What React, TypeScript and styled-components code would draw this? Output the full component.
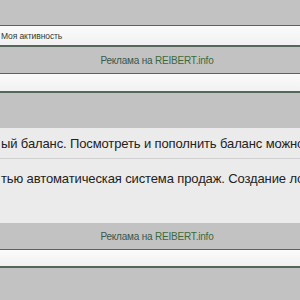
import React from "react";
import styled, { createGlobalStyle } from "styled-components";

const Global = createGlobalStyle`
  html, body { margin: 0; padding: 0; background: #c2c2c2; }
  body { width: 300px; height: 300px; overflow: hidden; font-family: Tahoma, "Liberation Sans", "DejaVu Sans", sans-serif; }
`;

const Page = styled.div`
  display: flex;
  flex-direction: column;
  width: 300px;
  height: 300px;
  overflow: hidden;
  background: #c2c2c2;
`;

const GraySpace = styled.div<{ $h: number }>`
  height: ${(p) => p.$h}px;
  background: #c2c2c2;
  flex-shrink: 0;
`;

const WhiteBar = styled.div<{ $h: number }>`
  height: ${(p) => p.$h}px;
  flex-shrink: 0;
  border-top: 1px solid #56665a;
  border-bottom: 2px solid #56665a;
  background: linear-gradient(#fbfbfb, #f1f1f1);
  display: flex;
  align-items: center;
  box-sizing: content-box;
`;

const NavLink = styled.span`
  font-size: 8.5px;
  letter-spacing: -0.1px;
  color: #2e3a32;
  padding-left: 1px;
`;

const AdBar = styled.div`
  height: 26px;
  flex-shrink: 0;
  background: #c2c2c2;
  display: flex;
  align-items: center;
  justify-content: center;
  font-size: 10px;
  letter-spacing: -0.2px;
  color: #3a574a;
  padding-left: 14px;
`;

const AdLink = styled.span`
  color: #3c6a3a;
`;

const Content = styled.div`
  height: 95px;
  flex-shrink: 0;
  background: #ebebeb;
  display: flex;
  flex-direction: column;
`;

const Row = styled.div<{ $sep?: boolean }>`
  height: 30px;
  display: flex;
  align-items: center;
  white-space: nowrap;
  overflow: hidden;
  font-size: 13px;
  letter-spacing: -0.12px;
  color: #222;
  padding-left: 1px;
  border-top: ${(p) => (p.$sep ? "1px solid #cfcfcf" : "none")};
  padding-top: ${(p) => (p.$sep ? "4px" : "0")};
`;

export default function App() {
  return (
    <Page>
      <Global />
      <GraySpace $h={25} />
      <WhiteBar $h={19}>
        <NavLink>Моя активность</NavLink>
      </WhiteBar>
      <AdBar>
        Реклама на&nbsp;<AdLink>REIBERT.info</AdLink>
      </AdBar>
      <WhiteBar $h={17} />
      <GraySpace $h={35} />
      <Content>
        <Row>ый баланс. Посмотреть и пополнить баланс можно в</Row>
        <Row $sep>тью автоматическая система продаж. Создание лота</Row>
      </Content>
      <AdBar>
        Реклама на&nbsp;<AdLink>REIBERT.info</AdLink>
      </AdBar>
      <WhiteBar $h={16} />
      <GraySpace $h={40} />
    </Page>
  );
}
